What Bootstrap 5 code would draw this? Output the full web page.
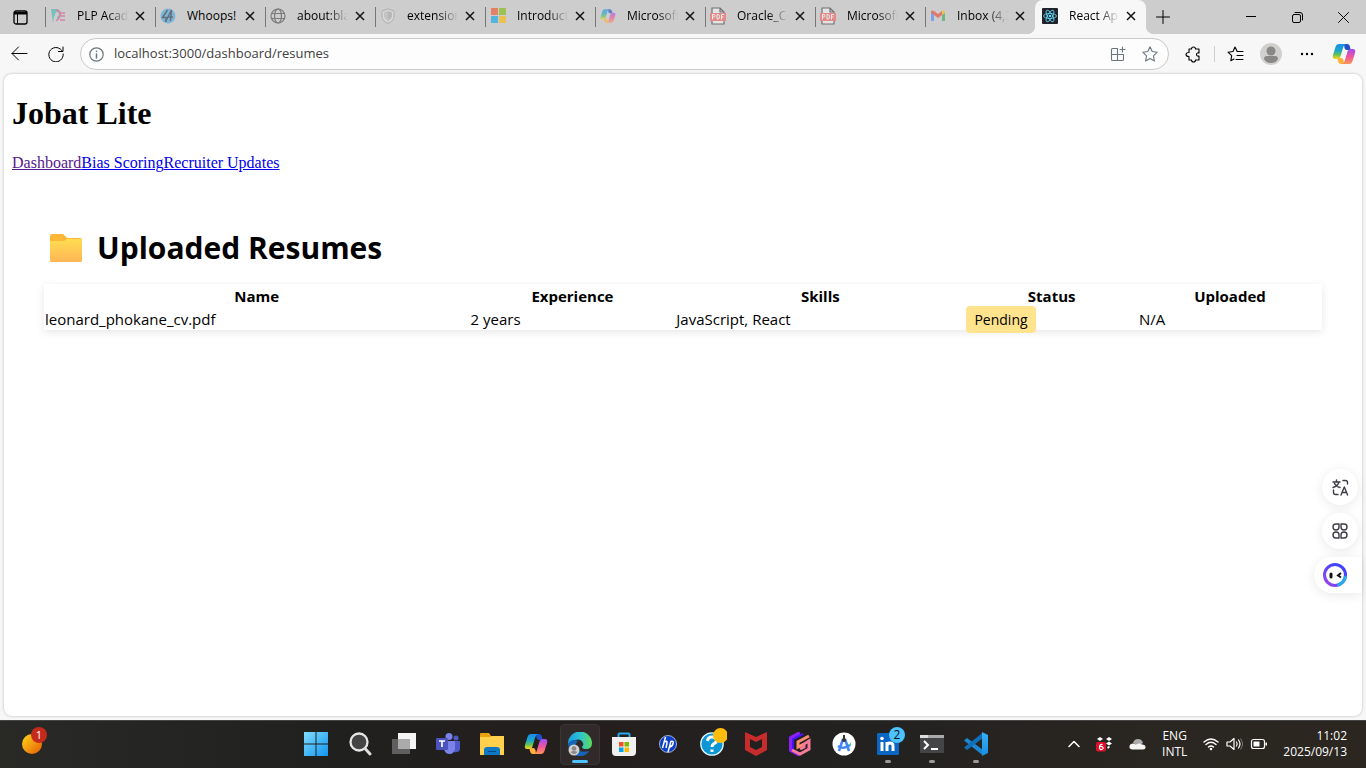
<!DOCTYPE html>
<html lang="en">
<head>
<meta charset="utf-8">
<meta name="viewport" content="width=device-width, initial-scale=1">
<title>React App</title>
<link rel="stylesheet" href="https://cdn.jsdelivr.net/npm/bootstrap@5.3.0/dist/css/bootstrap.min.css">
<style>
  :root { --ui: "Open Sans", "Noto Sans", sans-serif; }
  body { font-family: var(--ui); background: #f7f7f7; color: #000; overflow: hidden; }
  button { background: none; border: 0; padding: 0; color: inherit; }
  svg { display: block; flex: none; }
  .ln { fill: none; stroke: currentColor; stroke-linecap: round; stroke-linejoin: round; }

  /* tab strip */
  .strip { background: #cdcdcd; height: 34px; }
  .strip-menu { width: 45px; padding-right: 5px; }
  .tab { flex: 0 1 110px; min-width: 0; height: 34px; padding: 0 10px 2px 5px; font-size: 12px; position: relative; }
  .tab::before { content: ""; position: absolute; left: 0; top: 7px; height: 20px; border-left: 1px solid #777; }
  .tab-icon { opacity: .6; }
  .tab-title { flex: 1 1 0; min-width: 0; margin: 0 7px 0 11px; overflow: hidden; white-space: nowrap; text-align: left;
    -webkit-mask-image: linear-gradient(90deg, #000 60%, transparent); mask-image: linear-gradient(90deg, #000 60%, transparent); }
  .tab-title.whole { -webkit-mask-image: none; mask-image: none; margin-right: 4px; }
  .tab.current { background: #f7f7f7; border-radius: 8px 8px 0 0; flex-basis: 111px; padding-left: 7px; }
  .tab.current::before { left: -8px; top: auto; bottom: 0; width: 8px; height: 8px; border: 0; background: radial-gradient(circle at 0 0, #cdcdcd 8px, #f7f7f7 8px); }
  .tab.current::after { content: ""; position: absolute; right: -8px; bottom: 0; width: 8px; height: 8px; background: radial-gradient(circle at 100% 0, #cdcdcd 8px, #f7f7f7 8px); }
  .tab.current .tab-icon { opacity: 1; }
  .new-tab { width: 34px; height: 32px; }
  .win { width: 46px; height: 34px; }

  /* toolbar */
  .tools { height: 40px; padding: 0 10px 0 11px; }
  .address { height: 32px; background: #fdfdfd; border: 1px solid #c9c9c9; border-radius: 16px; padding: 0 10px 0 8px; }
  .address input { border: 0; outline: 0; background: none; font-size: 13px; color: #404040; min-width: 0; }
  .rule { width: 1px; height: 16px; background: #cfcfcf; margin: 0 8px 0 12px; }

  /* page */
  .page { background: #fff; margin: 0 4px 4px; padding: 21px 8px 8px; border-radius: 8px; box-shadow: 0 0 3px rgba(0,0,0,.25); position: relative; min-height: 0; }
  .brand { font: bold 32px/36px "Liberation Serif", serif; margin-bottom: 23px; }
  .site-nav { font: 16px/18px "Liberation Serif", serif; }
  .site-nav a { color: #00e; }
  .site-nav a.seen { color: #551a8b; }
  .resumes { padding: 56px 32px; }
  .resumes h2 { font-size: 30px; line-height: 40px; font-weight: 700; margin-bottom: 16px; gap: 13px; padding-left: 5px; }
  .resumes table { width: 100%; table-layout: fixed; box-shadow: 0 2px 8px rgba(0,0,0,.1); font-size: 15px; line-height: 21px; }
  .resumes th, .resumes td { padding: 2px 1px 0; }
  .resumes th { text-align: center; }
  .pill { background: #ffe38d; border-radius: 4px; padding: 4px 8px; font-size: 14px; }
  .w-name { width: 33.3%; } .w-exp { width: 16.1%; } .w-skill { width: 22.7%; } .w-stat { width: 13.5%; }
  .assist { position: absolute; right: 0; top: 395px; gap: 8px; color: #3d3d46; }
  .assist button { width: 36px; height: 36px; border-radius: 50%; background: #fff; box-shadow: 0 2px 12px rgba(0,0,0,.09); margin-right: 4px; }
  .assist .tail { width: 48px; border-radius: 18px 0 0 18px; margin-right: 0; padding-right: 6px; }

  /* taskbar */
  .taskbar { background: linear-gradient(90deg, #292a26, #20201f 25%, #241f1d 42%, #222120 60%, #2a2621 85%, #2b2620); border-top: 1px solid #454545; height: 48px; padding-bottom: 2px; color: #fff; }
  .widgets { width: 294px; padding-left: 20px; }
  .app { width: 44px; height: 45px; position: relative; }
  .app.live::after { content: ""; position: absolute; bottom: 3px; left: 19px; width: 6px; height: 3px; border-radius: 2px; background: #9b9b9b; }
  .app.front::before { content: ""; position: absolute; inset: 3px 2px 1px; border: 1px solid #3a3634; background: #302b2a; border-radius: 4px; }
  .app.front::after { left: 14px; width: 16px; background: #4cc2ff; }
  .app svg { position: relative; }
  .count { position: absolute; width: 16px; height: 16px; border-radius: 50%; font-size: 11px; line-height: 16px; text-align: center; }
  .count.red { background: #c42b1c; left: 11px; top: -6px; color: #fff; }
  .count.blue { background: #4cc2ff; color: #111; left: 23px; top: 6px; font-size: 12px; }
  .tray { padding-right: 19px; font-size: 12px; line-height: 16px; }
</style>
</head>
<body class="vh-100 d-flex flex-column">

<svg width="0" height="0" class="position-absolute" aria-hidden="true">
  <defs>
    <linearGradient id="cpA" x1="0" y1="0" x2="0" y2="1"><stop offset="0" stop-color="#1a8df0"/><stop offset=".45" stop-color="#1ca8c8"/><stop offset=".7" stop-color="#5fc258"/><stop offset="1" stop-color="#ffd51c"/></linearGradient>
    <linearGradient id="cpB" x1="0" y1="0" x2="0" y2="1"><stop offset="0" stop-color="#a04df5"/><stop offset=".5" stop-color="#ee55a0"/><stop offset="1" stop-color="#ff9550"/></linearGradient>
    <linearGradient id="wi" x1="0" y1="0" x2="1" y2="1"><stop offset="0" stop-color="#7fdcff"/><stop offset="1" stop-color="#1195f0"/></linearGradient>
    <linearGradient id="fo" x1="0" y1="0" x2="0" y2="1"><stop offset="0" stop-color="#ffdd50"/><stop offset="1" stop-color="#ffb657"/></linearGradient>
    <linearGradient id="ed" x1="0" y1="0" x2="1" y2="0"><stop offset="0" stop-color="#1a9be0"/><stop offset=".5" stop-color="#2bc3d2"/><stop offset="1" stop-color="#5fdc58"/></linearGradient>
    <linearGradient id="su" x1="0" y1="0" x2="1" y2="1"><stop offset="0" stop-color="#ffd91a"/><stop offset="1" stop-color="#e65a05"/></linearGradient>
    <linearGradient id="bot" x1="1" y1="0" x2="0" y2="1"><stop offset="0" stop-color="#3340ff"/><stop offset=".5" stop-color="#5a48ff"/><stop offset="1" stop-color="#a93fe8"/></linearGradient>
    <linearGradient id="vs" x1="0" y1="0" x2="0" y2="1"><stop offset="0" stop-color="#38b0f5"/><stop offset="1" stop-color="#1b8ee0"/></linearGradient>
  </defs>
  <symbol id="i-close" viewBox="0 0 10 10"><path d="M1 1l8 8M9 1L1 9" stroke="#111" stroke-width="1.5" fill="none"/></symbol>
  <symbol id="i-copilot" viewBox="0 0 24 22">
    <path d="M12 1h3q2.500 0 3 3l.8 3H15q-2 0-2.500-2z" fill="#1e50c8"/>
    <path d="M12 21H9q-2.500 0-3-3l-.8-3H9q2 0 2.500 2z" fill="#ffb13c"/>
    <path d="M7 1h7.500q-2.500.5-3.200 3L8.500 13.500Q7.800 16 5.500 16H3Q0 16 1 12L3.500 4Q4.500 1 7 1z" fill="url(#cpA)"/>
    <path d="M17 21H9.500q2.500-.5 3.200-3l2.800-9.500Q16.200 6 18.500 6H21q3 0 2 4l-2.500 8q-1 3-3.500 3z" fill="url(#cpB)"/>
  </symbol>
  <symbol id="i-pdf" viewBox="0 0 16 18">
    <path d="M2 1h8l4 4v12H2zM10 1v4h4" fill="#f4f4f4" stroke="#333" stroke-width="1.200"/>
    <rect x="0" y="6" width="16" height="8" fill="#f25c5c"/>
    <path d="M2.500 12.500v-5h1.500q1 0 1 1.200T4 10H2.500M7 7.500v4.500h1q1.500 0 1.500-2.200T8 7.500zM11.500 12.500v-5H14M11.500 10h2" fill="none" stroke="#fff" stroke-width="1"/>
  </symbol>
</svg>

<header>
  <div class="strip d-flex align-items-center">
    <button class="strip-menu d-flex justify-content-center" aria-label="Tab actions"><svg width="15" height="15" viewBox="0 0 15 15"><rect x="1" y="1" width="13" height="13" rx="2" fill="none" stroke="#000" stroke-width="1.300"/><path d="M1 2h13v2.500H1z"/><path d="M4.500 4v10" stroke="#000" stroke-width="1"/></svg></button>
    <div class="tab d-flex align-items-center"><svg class="tab-icon" width="16" height="16" viewBox="0 0 16 16"><path d="M1 1h6q4 1 4 5t-4 6v-3q2-1 2-3T6 4L4 9l-1 6z" fill="#40b8b0"/><path d="M6 2q5 1 4 6-1 3-4 5M10 5h5M11 8h4M10 12h5" stroke="#e0508c" stroke-width="1.500" fill="none"/></svg><span class="tab-title">PLP Acade</span><button aria-label="Close tab"><svg width="10" height="10"><use href="#i-close"/></svg></button></div>
    <div class="tab d-flex align-items-center"><svg class="tab-icon" width="16" height="16" viewBox="0 0 16 16"><circle cx="8" cy="8" r="7.500" fill="#48a8e0"/><path d="M7.500 2L2.500 9.500h4L5.500 14 11.500 2l-1 11M8 9h5" fill="none" stroke="#234" stroke-width="1.500"/></svg><span class="tab-title whole">Whoops!</span><button aria-label="Close tab"><svg width="10" height="10"><use href="#i-close"/></svg></button></div>
    <div class="tab d-flex align-items-center"><svg class="tab-icon" width="16" height="16" viewBox="0 0 16 16"><g fill="none" stroke="#444" stroke-width="1.200"><circle cx="8" cy="8" r="7"/><ellipse cx="8" cy="8" rx="3.500" ry="7"/><path d="M1.500 5.500h13M1.500 10.500h13"/></g></svg><span class="tab-title">about:bla</span><button aria-label="Close tab"><svg width="10" height="10"><use href="#i-close"/></svg></button></div>
    <div class="tab d-flex align-items-center"><svg class="tab-icon" width="16" height="16" viewBox="0 0 16 16"><path d="M8 .8l6 2.200v5q0 5-6 7.500Q2 13 2 8V3z" fill="#ddd" stroke="#999"/><path d="M8 3l4 1.500v4Q11 11 8 13z" fill="#aaa"/><path d="M8 3L4 4.500v4Q5 11 8 13z" fill="#bbb"/></svg><span class="tab-title">extension</span><button aria-label="Close tab"><svg width="10" height="10"><use href="#i-close"/></svg></button></div>
    <div class="tab d-flex align-items-center"><svg class="tab-icon" width="16" height="16" viewBox="0 0 16 16"><path d="M1 0h7v7H1z" fill="#f25022"/><path d="M9 0h7v7H9z" fill="#7fba00"/><path d="M1 8h7v7H1z" fill="#00a4ef"/><path d="M9 8h7v7H9z" fill="#ffb900"/></svg><span class="tab-title">Introduct</span><button aria-label="Close tab"><svg width="10" height="10"><use href="#i-close"/></svg></button></div>
    <div class="tab d-flex align-items-center"><svg class="tab-icon" width="16" height="16"><use href="#i-copilot"/></svg><span class="tab-title">Microsoft</span><button aria-label="Close tab"><svg width="10" height="10"><use href="#i-close"/></svg></button></div>
    <div class="tab d-flex align-items-center"><svg class="tab-icon" width="16" height="18"><use href="#i-pdf"/></svg><span class="tab-title">Oracle_Ce</span><button aria-label="Close tab"><svg width="10" height="10"><use href="#i-close"/></svg></button></div>
    <div class="tab d-flex align-items-center"><svg class="tab-icon" width="16" height="18"><use href="#i-pdf"/></svg><span class="tab-title">Microsoft</span><button aria-label="Close tab"><svg width="10" height="10"><use href="#i-close"/></svg></button></div>
    <div class="tab d-flex align-items-center"><svg class="tab-icon" width="16" height="16" viewBox="0 0 16 16"><path d="M1 4v9h3V6z" fill="#4285f4"/><path d="M15 4v9h-3V6z" fill="#34a853"/><path d="M1 3.500Q2 2 4 3l4 3 4-3v4L8 10 4 7 1 5z" fill="#ea4335"/><path d="M12 3q2-1 3 .5V5l-3 2z" fill="#fbbc04"/></svg><span class="tab-title">Inbox (4,3</span><button aria-label="Close tab"><svg width="10" height="10"><use href="#i-close"/></svg></button></div>
    <div class="tab current d-flex align-items-center"><svg class="tab-icon" width="16" height="16" viewBox="0 0 16 16"><rect width="16" height="16" rx="1" fill="#20232a"/><g fill="none" stroke="#61dafb" stroke-width=".8"><ellipse cx="8" cy="8" rx="6.500" ry="2.500"/><ellipse cx="8" cy="8" rx="6.500" ry="2.500" transform="rotate(60 8 8)"/><ellipse cx="8" cy="8" rx="6.500" ry="2.500" transform="rotate(120 8 8)"/></g><circle cx="8" cy="8" r="1.300" fill="#61dafb"/></svg><span class="tab-title">React App</span><button aria-label="Close tab"><svg width="10" height="10"><use href="#i-close"/></svg></button></div>
    <button class="new-tab d-flex align-items-center justify-content-center" aria-label="New tab"><svg width="14" height="14" viewBox="0 0 14 14"><path class="ln" d="M7 .5v13M.5 7h13"/></svg></button>
    <div class="d-flex ms-auto">
      <button class="win d-flex align-items-center justify-content-center" aria-label="Minimize"><svg width="10" height="10" viewBox="0 0 10 10"><path class="ln" d="M0 4.500h10"/></svg></button>
      <button class="win d-flex align-items-center justify-content-center" aria-label="Restore"><svg width="11" height="11" viewBox="0 0 11 11"><rect class="ln" x=".5" y="2.500" width="8" height="8" rx="1.500"/><path class="ln" d="M3 .5h5q2.500 0 2.500 2.500v5"/></svg></button>
      <button class="win d-flex align-items-center justify-content-center" aria-label="Close window"><svg width="11" height="11" viewBox="0 0 11 11"><path class="ln" d="M.5.5l10 10M10.500.5l-10 10"/></svg></button>
    </div>
  </div>

  <div class="tools d-flex align-items-center">
    <button class="me-3" aria-label="Back"><svg width="17" height="16" viewBox="0 0 17 16"><path class="ln" d="M16 7.500H1M7.500 1L1 7.500 7.500 14"/></svg></button>
    <button class="ms-1 me-3" aria-label="Refresh"><svg width="16" height="16" viewBox="0 0 16 16"><path class="ln" d="M14.500 5.500A7.200 7.200 0 1 0 15.200 8M15 1v4.500h-4.500"/></svg></button>
    <form class="address flex-grow-1 d-flex align-items-center">
      <svg width="15" height="15" viewBox="0 0 15 15" class="text-secondary"><circle class="ln" cx="7.500" cy="7.500" r="6.700" stroke-width="1.200"/><path class="ln" d="M7.500 7v4M7.500 4.200v.2" stroke-width="1.500"/></svg>
      <input class="flex-grow-1 ms-2" type="text" aria-label="Address" value="localhost:3000/dashboard/resumes">
      <button type="button" class="text-secondary" aria-label="Install app"><svg width="16" height="16" viewBox="0 0 16 16"><path class="ln" d="M7.500 2.500H2.500q-1 0-1 1v10q0 1 1 1h10q1 0 1-1v-5h-12M7.500 2.500v12M12.500 1v5M10 3.500h5" stroke-width="1.100"/></svg></button>
      <button type="button" class="text-secondary ms-3" aria-label="Add to favorites"><svg width="16" height="16" viewBox="0 0 16 16"><path class="ln" d="M8 .8l2.200 4.700 5 .7-3.700 3.600.9 5.200L8 12.500 3.600 15l.9-5.200L.8 6.200l5-.7z" stroke-width="1.100"/></svg></button>
    </form>
    <div class="d-flex align-items-center">
      <button class="ms-3" aria-label="Extensions"><svg width="17" height="17" viewBox="0 0 17 17"><path class="ln" d="M4 3h2.500q0-2 2-2t2 2H14v4q-2.500-.5-2.500 1.500T14 10v4h-3.500q0 2-2 2t-2-2H4v-3.500q-3 0-3-2t3-2z" stroke-width="1.100"/></svg></button>
      <span class="rule"></span>
      <button class="ms-1" aria-label="Favorites"><svg width="17" height="16" viewBox="0 0 17 16"><path class="ln" d="M10 5L8 1 6 5.500l-5 .7 3.700 3.500-.9 5L7 13M10 5.500h6M10 9.500h6M9 13.500h7" stroke-width="1.100"/></svg></button>
      <button class="ms-3" aria-label="Profile"><svg width="22" height="22" viewBox="0 0 22 22"><circle cx="11" cy="11" r="11" fill="#d2d0ce"/><circle cx="11" cy="8" r="4.500" fill="#8a8886"/><path d="M4 16q0-3 3-3h8q3 0 3 3-2 4-7 4t-7-4z" fill="#8a8886"/></svg></button>
      <button class="ms-3" aria-label="Settings and more"><svg width="18" height="6" viewBox="0 0 18 6"><circle cx="4" cy="3" r="1.200"/><circle cx="9" cy="3" r="1.200"/><circle cx="14" cy="3" r="1.200"/></svg></button>
      <button class="ms-3" aria-label="Copilot"><svg width="24" height="22"><use href="#i-copilot"/></svg></button>
    </div>
  </div>
</header>

<main class="page flex-grow-1">
  <h1 class="brand">Jobat Lite</h1>
  <nav class="site-nav d-flex"><a class="seen" href="#">Dashboard</a><a href="#">Bias Scoring</a><a href="#">Recruiter Updates</a></nav>
  <section class="resumes">
    <h2 class="d-flex align-items-center">
      <svg width="35" height="30" viewBox="0 0 35 30" aria-hidden="true"><path d="M1 3q0-2 2-2h11l4 4h13q2 0 2 2v6H1z" fill="#ffb636"/><path d="M1 9q0-1 1-1h13l3-2h14q1 0 1 1v21q0 1-1 1H2q-1 0-1-1z" fill="url(#fo)"/></svg>
      Uploaded Resumes
    </h2>
    <table>
      <thead><tr><th class="w-name">Name</th><th class="w-exp">Experience</th><th class="w-skill">Skills</th><th class="w-stat">Status</th><th>Uploaded</th></tr></thead>
      <tbody><tr><td>leonard_phokane_cv.pdf</td><td>2 years</td><td>JavaScript, React</td><td><span class="pill">Pending</span></td><td>N/A</td></tr></tbody>
    </table>
  </section>
  <div class="assist d-flex flex-column align-items-end">
    <button class="d-flex align-items-center justify-content-center" aria-label="Translate"><svg width="17" height="17" viewBox="0 0 17 17"><path class="ln" d="M1 3h7M4.500 1v2M7 3Q6 7 1 8.500M2.500 4.500Q4 7.500 8 8.500M11 1.500h2.500q2 0 2 2V5M1.500 11v2.500q0 2 2 2H6M9 16l3.300-8L15.600 16M10 13.500h4.500" stroke-width="1.400"/></svg></button>
    <button class="d-flex align-items-center justify-content-center" aria-label="Tools"><svg width="16" height="16" viewBox="0 0 16 16"><path class="ln" d="M4 1h3v3a3 3 0 1 1-3-3zM12 1H9v3a3 3 0 1 0 3-3zM4 15h3v-3a3 3 0 1 0-3 3zM12 15H9v-3a3 3 0 1 1 3 3z" stroke-width="1.400"/></svg></button>
    <button class="tail d-flex align-items-center justify-content-center" aria-label="Assistant"><svg width="24" height="24" viewBox="0 0 24 24"><circle cx="12" cy="12" r="10.500" fill="none" stroke="url(#bot)" stroke-width="3"/><path d="M22.400 13a10.500 10.500 0 0 1-8 9.200" fill="none" stroke="#22aee8" stroke-width="3"/><path d="M8 11v3" stroke="#111" stroke-width="3" stroke-linecap="round"/><path d="M18 10l-3 2.500 3 2" fill="none" stroke="#111" stroke-width="2"/></svg></button>
  </div>
</main>

<footer class="taskbar d-flex align-items-center">
  <div class="widgets"><button class="position-relative d-block" aria-label="Widgets"><svg width="24" height="22" viewBox="0 0 24 22"><circle cx="12" cy="11" r="10" fill="url(#su)"/></svg><span class="count red">1</span></button></div>
  <div class="d-flex">
    <button class="app d-flex align-items-center justify-content-center" aria-label="Start"><svg width="24" height="24" viewBox="0 0 24 24"><path fill="url(#wi)" d="M0 0h11.500v11.500H0zM12.500 0H24v11.500H12.500zM0 12.500h11.500V24H0zM12.500 12.500H24V24H12.500z"/></svg></button>
    <button class="app d-flex align-items-center justify-content-center" aria-label="Search"><svg width="24" height="24" viewBox="0 0 24 24"><circle cx="11" cy="10" r="8.500" fill="#444" stroke="#e6e6e6" stroke-width="2.300"/><path d="M17 16.500l5 5.500" stroke="#ddd" stroke-width="3" stroke-linecap="round"/></svg></button>
    <button class="app d-flex align-items-center justify-content-center" aria-label="Task view"><svg width="26" height="24" viewBox="0 0 26 24"><path d="M7 1h18v16H7z" fill="#f5f5f5"/><path d="M1 7h18v15H1z" fill="#666" opacity=".9"/><path d="M7 7h12v10H7z" fill="#aaa"/></svg></button>
    <button class="app d-flex align-items-center justify-content-center" aria-label="Teams"><svg width="24" height="24" viewBox="0 0 24 24"><circle cx="20" cy="6" r="2.500" fill="#5059c9"/><circle cx="13" cy="4.500" r="3.500" fill="#7b83eb"/><path d="M17 9h7v8q-1 4-6 3z" fill="#5059c9"/><path d="M8 9h11v8q-1 5-5.500 5T8 17z" fill="#7b83eb"/><rect y="6" width="12" height="12" rx="1" fill="#4b53bc"/><path d="M3 9h6M6 9v6" stroke="#fff" stroke-width="1.600"/></svg></button>
    <button class="app d-flex align-items-center justify-content-center" aria-label="File Explorer"><svg width="24" height="24" viewBox="0 0 24 24"><path d="M0 2q0-1 1-1h8l2 3h12v8H0z" fill="#e8a30c"/><path d="M0 5h10l2-1h12v19H0z" fill="#ffd04c"/><path d="M4 23v-5q0-3 3-3h10q3 0 3 3v5z" fill="#0f78c4"/><path d="M8 19h8v1H8z" fill="#074b84"/></svg></button>
    <button class="app d-flex align-items-center justify-content-center" aria-label="Copilot"><svg width="24" height="22"><use href="#i-copilot"/></svg></button>
    <button class="app live front d-flex align-items-center justify-content-center" aria-label="Edge"><svg width="24" height="24" viewBox="0 0 24 24"><path d="M0 12A12 12 0 0 1 24 11q0 6-6 6-4 0-4-2 2-2 1-4-2-5-8-3-5 1-7 4z" fill="url(#ed)"/><path d="M0 12q4-6 10-3-4 3-1 8 3 4 12 2-4 6-11 5Q1 22 0 12z" fill="#1566b8"/><circle cx="6" cy="18" r="5.500" fill="#d2d0ce"/><circle cx="6" cy="16.500" r="2.300" fill="#888"/><path d="M2.500 20q3.500-2 7 0-3.500 4-7 0z" fill="#888"/></svg></button>
    <button class="app d-flex align-items-center justify-content-center" aria-label="Microsoft Store"><svg width="24" height="24" viewBox="0 0 24 24"><path d="M6.500 6V2.500q0-1 1-1h9q1 0 1 1V6" fill="none" stroke="#28a8ea" stroke-width="2"/><path d="M0 5h24v15q0 4-4 4H4q-4 0-4-4z" fill="#f0f0f0"/><path d="M7 10h4.500v4.500H7z" fill="#f25022"/><path d="M12.500 10H17v4.500h-4.500z" fill="#7fba00"/><path d="M7 15.500h4.500V20H7z" fill="#00a4ef"/><path d="M12.500 15.500H17V20h-4.500z" fill="#ffb900"/></svg></button>
    <button class="app d-flex align-items-center justify-content-center" aria-label="HP"><svg width="18" height="18" viewBox="0 0 18 18"><circle cx="9" cy="9" r="8.500" fill="#0b3fc4" stroke="#dce6ff" stroke-width=".7"/><path d="M6.500 2L3.500 13M5.500 7q3-2 2.500 1L7 13M12 6L9 17M12 6.500q3-1 2 2-1 4-4 3.500" fill="none" stroke="#fff" stroke-width="1.500"/></svg></button>
    <button class="app d-flex align-items-center justify-content-center" aria-label="Support"><svg width="30" height="32" viewBox="0 0 30 32"><circle cx="15" cy="16" r="11.200" fill="#0d96d6" stroke="#dff4ff" stroke-width="1.300"/><path d="M10.500 13q.5-4 4.500-4t4.500 3.500q0 2-3 3.500-1.500 1-1.500 3M15 21.500V24" fill="none" stroke="#fff" stroke-width="3"/><circle cx="23.500" cy="7.500" r="7.500" fill="#ffbd0b"/></svg></button>
    <button class="app d-flex align-items-center justify-content-center" aria-label="McAfee"><svg width="22" height="24" viewBox="0 0 22 24"><path d="M0 0l11 5L22 0v18l-11 6-11-6zM5 7v8l6 3 6-3V7l-6 3z" fill="#c62c2c" fill-rule="evenodd"/></svg></button>
    <button class="app d-flex align-items-center justify-content-center" aria-label="G Hub"><svg width="22" height="24" viewBox="0 0 22 24"><path d="M11 1L2 6v12l9 5" fill="none" stroke="#8a22f5" stroke-width="4"/><path d="M4 17V7l10-5" fill="none" stroke="#4a13ff" stroke-width="2"/><path d="M20 4l-11 6v5l6-3" fill="none" stroke="#ff8f72" stroke-width="3"/><path d="M3 18l8 4 9-5V9l-5 3v3l-4 2" fill="none" stroke="#f97a98" stroke-width="3"/></svg></button>
    <button class="app d-flex align-items-center justify-content-center" aria-label="Android Studio"><svg width="24" height="24" viewBox="0 0 24 24"><circle cx="12" cy="12" r="11.500" fill="#fff"/><path d="M11 7L7 19M13 7l4 12M6 14q6 4 12-1" fill="none" stroke="#4285f4" stroke-width="2.500"/><path d="M12 3v4" stroke="#333" stroke-width="2"/><circle cx="12" cy="8" r="2" fill="#333"/><path d="M17 13l2-3v4z" fill="#3ddc84"/></svg></button>
    <button class="app live d-flex align-items-center justify-content-center" aria-label="LinkedIn"><svg width="22" height="22" viewBox="0 0 22 22"><rect width="22" height="22" rx="1" fill="#0a66c2"/><circle cx="5" cy="5.500" r="1.800" fill="#fff"/><path d="M5 9v9M10 18V9M10 13q0-3 3-3t3 3v5" fill="none" stroke="#fff" stroke-width="3"/></svg><span class="count blue">2</span></button>
    <button class="app live d-flex align-items-center justify-content-center" aria-label="Terminal"><svg width="24" height="20" viewBox="0 0 24 20"><rect y="1" width="24" height="18" rx="1" fill="#444547"/><path d="M0 1h24v3H0z" fill="#aaa"/><path d="M0 1h8v3H0z" fill="#ddd"/><path d="M4 7l4 4-4 4M11 15h7" fill="none" stroke="#fff" stroke-width="2"/></svg></button>
    <button class="app live d-flex align-items-center justify-content-center" aria-label="Visual Studio Code"><svg width="24" height="24" viewBox="0 0 24 24"><path d="M0 8.500L3 6l16 12v5.500z" fill="#1b88d6"/><path d="M0 15.500L3 18 19 6V.5z" fill="#0f6fb8"/><path d="M18 0l6 3v18l-6 3z" fill="url(#vs)"/></svg></button>
  </div>
  <div class="tray ms-auto d-flex align-items-center">
    <button class="me-3" aria-label="Hidden icons"><svg width="12" height="8" viewBox="0 0 12 8"><path class="ln" d="M1 6.500l5-5 5 5" stroke-width="1.500"/></svg></button>
    <button aria-label="Dropbox" class="me-3"><svg width="17" height="16" viewBox="0 0 17 16"><path d="M4 1l3 2-3 2-3-2zM13 1l3 2-3 2-3-2zM13 5.500l3 2-3 2-3-2zM11 11l2-1 1 1-2 2z" fill="#fff"/><rect y="6" width="10" height="9.500" rx="2" fill="#e0102c"/><path d="M6.500 8.500Q3.500 8 3.500 11t2 2.500 1.500-2-3-1" fill="none" stroke="#fff" stroke-width="1.200"/></svg></button>
    <button aria-label="OneDrive" class="me-3"><svg width="17" height="12" viewBox="0 0 17 12"><path d="M4 5q1-4 5-4 4 0 5 4l-5 3z" fill="#aaa"/><path d="M3 11.500q-3-.5-2.500-3.500Q1 5.500 4 5.500l3 1q4-2 6 0 3.500 0 3.500 2.500T14 11.500z" fill="#f4f4f4"/></svg></button>
    <button class="me-3 text-center" aria-label="Language">ENG<br>INTL</button>
    <button class="d-flex align-items-center me-3" aria-label="Network, volume and battery"><svg width="64" height="16" viewBox="0 0 64 16"><path class="ln" d="M1 6q7-6 14 0M3 8.500q5-4.500 10 0M5.500 11q2.500-2 5 0" stroke-width="1.400"/><circle cx="8" cy="13" r="1.300" fill="#fff"/><path class="ln" d="M24 6h3l4-3.500v11L27 10h-3zM33.500 6q1.500 2 0 4M35.500 4q3 4 0 8" stroke-width="1.200"/><path d="M37.500 2.500q4 5.500 0 11" fill="none" stroke="#777"/><rect class="ln" x="48.500" y="3.500" width="13" height="9" rx="2" stroke-width="1.200"/><path d="M50.500 5.500h6v5h-6zM62.500 6.500H64v3h-1.500z" fill="#fff"/></svg></button>
    <button class="text-end" aria-label="Clock">11:02<br>2025/09/13</button>
  </div>
</footer>

<script src="https://cdn.jsdelivr.net/npm/bootstrap@5.3.0/dist/js/bootstrap.bundle.min.js"></script>
</body>
</html>
